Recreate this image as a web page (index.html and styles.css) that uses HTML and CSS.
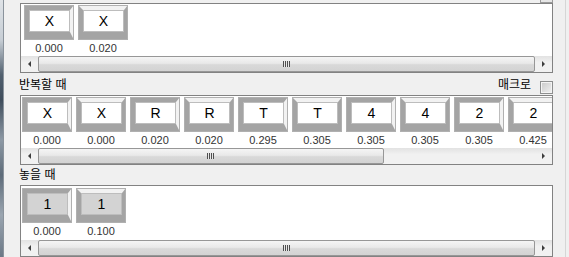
FILE: index.html
```html
<!DOCTYPE html>
<html lang="ko">
<head>
    <meta charset="UTF-8">
    <title>키 입력 편집</title>
    <link rel="stylesheet" href="styles.css">
</head>
<body>
    <div class="window">
        <div class="frame-edge"></div>
        <div class="panel">
            <div class="top-stub"><span class="stub-box"></span></div>

            <div class="track-box">
                <div class="keys pad-wide">
                    <div class="cell"><div class="key down">X</div><span class="time">0.000</span></div>
                    <div class="cell"><div class="key up">X</div><span class="time">0.020</span></div>
                </div>
                <div class="hscroll">
                    <span class="arrow left"></span>
                    <div class="track"><div class="thumb" style="width: 100%"><span class="grip"></span></div></div>
                    <span class="arrow right"></span>
                </div>
            </div>

            <div class="caption">
                <span class="caption-text">반복할 때</span>
                <label class="macro"><span class="caption-text">매크로</span><span class="check"></span></label>
            </div>
            <div class="track-box">
                <div class="keys">
                    <div class="cell"><div class="key down">X</div><span class="time">0.000</span></div>
                    <div class="cell"><div class="key up">X</div><span class="time">0.000</span></div>
                    <div class="cell"><div class="key down">R</div><span class="time">0.020</span></div>
                    <div class="cell"><div class="key up">R</div><span class="time">0.020</span></div>
                    <div class="cell"><div class="key down">T</div><span class="time">0.295</span></div>
                    <div class="cell"><div class="key up">T</div><span class="time">0.305</span></div>
                    <div class="cell"><div class="key down">4</div><span class="time">0.305</span></div>
                    <div class="cell"><div class="key up">4</div><span class="time">0.305</span></div>
                    <div class="cell"><div class="key down">2</div><span class="time">0.305</span></div>
                    <div class="cell"><div class="key up">2</div><span class="time">0.425</span></div>
                </div>
                <div class="hscroll">
                    <span class="arrow left"></span>
                    <div class="track"><div class="thumb" style="width: 69.6%"><span class="grip"></span></div></div>
                    <span class="arrow right"></span>
                </div>
            </div>

            <div class="caption short">
                <span class="caption-text">놓을 때</span>
            </div>
            <div class="track-box last">
                <div class="keys">
                    <div class="cell"><div class="key down grey">1</div><span class="time">0.000</span></div>
                    <div class="cell"><div class="key up grey">1</div><span class="time">0.100</span></div>
                </div>
                <div class="hscroll">
                    <span class="arrow left"></span>
                    <div class="track"><div class="thumb" style="width: 100%"><span class="grip"></span></div></div>
                    <span class="arrow right"></span>
                </div>
            </div>
        </div>
        <div class="rim"></div>
    </div>
</body>
</html>
```

FILE: styles.css
```css
body {
    margin: 0;
    padding: 0;
    background: #f0f0f0;
    font-family: "Liberation Sans", Arial, sans-serif;
    color: #000;
}
.window {
    display: flex;
    height: 257px;
    overflow: hidden;
}
.frame-edge {
    width: 3px;
    flex: none;
    border-right: 1px solid #8a939c;
    background: linear-gradient(180deg, #dfe3e7 0px, #c7ced5 40px, #51606f 75px, #3f4d5c 100px, #8d99a5 140px, #5d6b79 175px, #9aa5b0 215px, #6b7886 257px);
}
.panel {
    width: 533px;
    margin-left: 16px;
    flex: none;
}
.rim {
    width: 1px;
    margin-left: 12px;
    flex: none;
    background: #d6d6d6;
}

/* little leftover box from the section above */
.top-stub {
    height: 3px;
    display: flex;
    justify-content: flex-end;
}
.stub-box {
    width: 11px;
    height: 2px;
    border: 1px solid #9a9a9a;
    border-top: none;
    background: #e6e6e6;
}

.caption {
    height: 22px;
    display: flex;
    justify-content: space-between;
    align-items: flex-end;
    padding-bottom: 1px;
    box-sizing: border-box;
    margin-left: -1px;
    font-family: "Noto Sans CJK KR", sans-serif;
    font-size: 12px;
}
.caption.short {
    height: 20px;
}
.caption-text {
    line-height: 17px;
    margin-bottom: 2px;
}
.macro {
    display: flex;
    align-items: flex-end;
}
.check {
    width: 11px;
    height: 11px;
    margin-left: 9px;
    border: 1px solid #8e8f8f;
    background: linear-gradient(135deg, #c9c9c9, #f2f2f2);
    box-shadow: inset 0 0 0 1px #f4f4f4;
}

.track-box {
    border: 1px solid #828282;
    background: #fff;
}
.keys {
    display: flex;
    gap: 4px;
    height: 52px;
    padding: 1px 0 0 1px;
    box-sizing: border-box;
    overflow: hidden;
}
.keys.pad-wide {
    padding-left: 3px;
}
.track-box.last .keys {
    height: 54px;
    padding-top: 2px;
}
.cell {
    width: 50px;
    flex: none;
    display: flex;
    flex-direction: column;
    align-items: center;
}
.key {
    width: 50px;
    height: 35px;
    box-sizing: border-box;
    border-style: solid;
    border-width: 5px 4px 8px 5px;
    background: #fff;
    box-shadow: inset 0 0 0 1px #bdbdbd;
    outline: 1px solid #b0b0b0;
    outline-offset: -1px;
    display: flex;
    align-items: center;
    justify-content: center;
    font-size: 14px;
    line-height: 1;
}
.key.down {
    border-color: #a4a4a4 #f2f2f2 #a4a4a4 #a4a4a4;
}
.key.up {
    border-color: #f2f2f2 #a4a4a4 #a4a4a4 #a4a4a4;
}
.key.grey {
    background: #d3d3d3;
}
.time {
    font-size: 11px;
    line-height: 16px;
    color: #333;
}

/* windows style horizontal scroll bar */
.hscroll {
    display: flex;
    height: 16px;
    background: linear-gradient(180deg, #e2e2e2, #f1f1f1 40%, #f1f1f1);
}
.arrow {
    width: 17px;
    flex: none;
    display: flex;
    align-items: center;
    justify-content: center;
}
.arrow::before {
    content: "";
    border-top: 3px solid transparent;
    border-bottom: 3px solid transparent;
}
.arrow.left::before {
    border-right: 3px solid #3d3d3d;
}
.arrow.right::before {
    border-left: 3px solid #3d3d3d;
}
.track {
    flex: 1;
    display: flex;
}
.thumb {
    box-sizing: border-box;
    height: 16px;
    border: 1px solid #979797;
    border-radius: 2px;
    background: linear-gradient(180deg, #f5f5f5, #e9e9e9 45%, #d9d9d9 55%, #d3d3d3);
    display: flex;
    align-items: center;
    justify-content: center;
}
.grip {
    width: 7px;
    height: 6px;
    background: repeating-linear-gradient(90deg, #4f4f4f 0 1px, #e8e8e8 1px 2px);
}
```
